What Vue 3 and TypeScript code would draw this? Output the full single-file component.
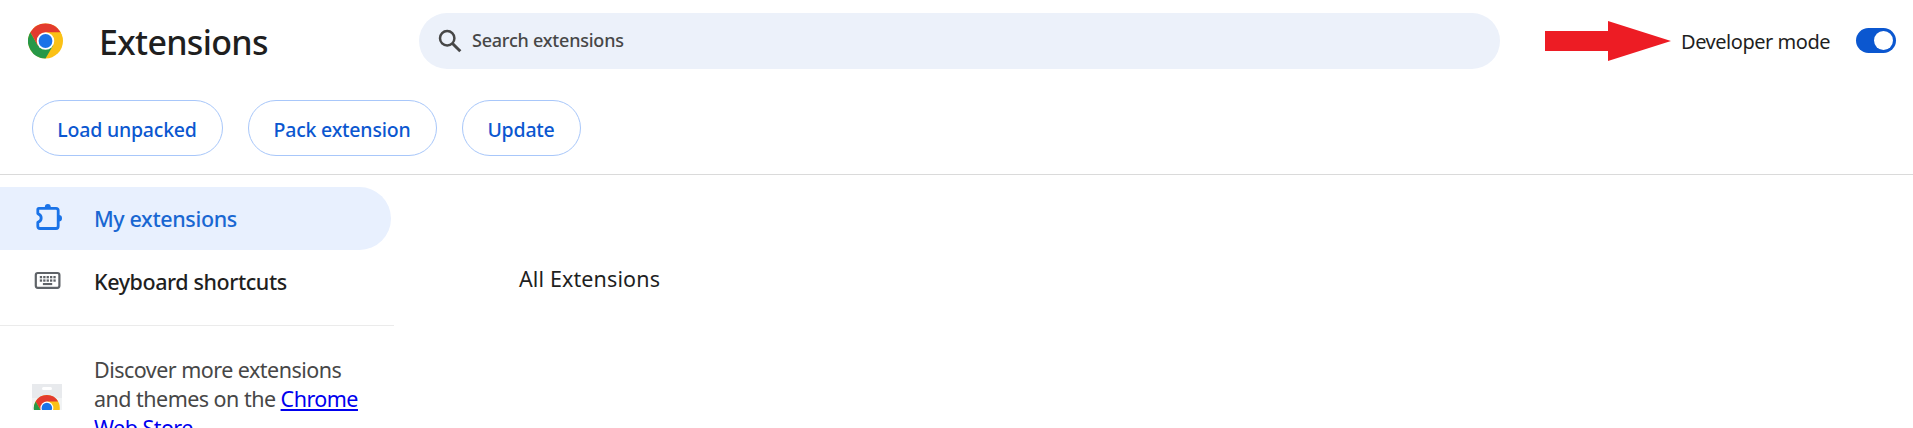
<script setup lang="ts">
interface Action {
  label: string
  name: string
}

const actions: Action[] = [
  { label: 'Load unpacked', name: 'load' },
  { label: 'Pack extension', name: 'pack' },
  { label: 'Update', name: 'update' },
]

const keyColumns = [0, 1, 2, 3, 4]
</script>

<template>
  <div class="page">
    <header class="topbar">
      <svg class="logo" viewBox="0 0 36 36">
        <circle cx="18" cy="18" r="18" fill="#fbc116" />
        <path d="M18 18 L2.41 9 A18 18 0 0 1 33.59 9 Z" fill="#e33b2e" />
        <path d="M18 9 H33.59 L34 14 L26 18 Z" fill="#fbc116" />
        <path d="M2.41 9 A18 18 0 0 0 18 36 L25.79 22.5 L18 18 L10.2 22.5 Z" fill="#279847" />
        <path d="M2.41 9 L10.2 22.5 L18 18 L18 9 Z" fill="#e33b2e" />
        <circle cx="18" cy="18" r="9" fill="#fff" />
        <circle cx="18" cy="18" r="7.1" fill="#1a73e8" />
      </svg>
      <h1 class="title">Extensions</h1>
      <div class="search">
        <svg class="search-icon" viewBox="0 0 24 24">
          <circle cx="9.2" cy="9.2" r="7.2" fill="none" stroke="#474747" stroke-width="2.5" />
          <path d="M14.5 14.5 L22.3 22.3" stroke="#474747" stroke-width="3" />
        </svg>
        <span class="search-text">Search extensions</span>
      </div>
      <svg class="arrow" viewBox="0 0 126 40">
        <path d="M0 10 H63 V0 L126 20 L63 40 V30 H0 Z" fill="#ed1c24" />
      </svg>
      <span class="dev-label">Developer mode</span>
      <div class="toggle"><div class="knob"></div></div>
    </header>

    <div class="toolbar">
      <button v-for="a in actions" :key="a.name" class="action" :class="a.name">{{ a.label }}</button>
    </div>

    <div class="body">
      <nav class="sidebar">
        <div class="item selected">
          <svg class="item-icon puzzle" viewBox="0 0 28 28">
            <path
              d="M3.9 5.3 H21 Q23.2 5.3 23.2 7.5 V23.3 Q23.2 25.5 21 25.5 H5 Q2.8 25.5 2.8 23.3 V19.4 Q6.2 18.2 6.2 15 Q6.2 11.8 2.8 10.6 V6.4 Q2.8 5.3 3.9 5.3 Z"
              fill="none" stroke="#1a73e8" stroke-width="2.8" stroke-linejoin="round"
            />
            <path d="M9.8 4.5 A3 3.4 0 0 1 15.8 4.5 Z M23.8 12 A3.2 3.2 0 0 1 23.8 18.4 Z" fill="#1a73e8" />
          </svg>
          <span>My extensions</span>
        </div>
        <div class="item">
          <svg class="item-icon keyboard" viewBox="0 0 28 28">
            <rect x="1.8" y="6" width="23.6" height="14.8" rx="2" fill="none" stroke="#5f6368" stroke-width="2.2" />
            <g fill="#5f6368">
              <template v-for="c in keyColumns" :key="c">
                <rect :x="5.8 + c * 3.4" y="9" width="2.3" height="2.3" />
                <rect :x="5.8 + c * 3.4" y="12.4" width="2.3" height="2.3" />
              </template>
              <rect x="8.9" y="16" width="9.3" height="2.1" />
            </g>
          </svg>
          <span class="shortcuts">Keyboard shortcuts</span>
        </div>
        <div class="promo">
          <svg class="store" viewBox="0 0 30 26">
            <rect width="30" height="26" fill="#f1f3f4" />
            <rect width="30" height="14" fill="#e8eaed" />
            <rect x="10" y="3" width="10" height="3" rx="1.5" fill="#fff" />
            <g transform="translate(1.9 11) scale(0.72)">
              <circle cx="18" cy="18" r="18" fill="#fbc116" />
              <path d="M2.41 9 A18 18 0 0 1 33.59 9 L18 9 V18 L10.2 22.5 Z" fill="#e33b2e" />
              <path d="M2.41 9 A18 18 0 0 0 18 36 L25.79 22.5 L18 18 L10.2 22.5 Z" fill="#279847" />
              <circle cx="18" cy="18" r="9" fill="#fff" />
              <circle cx="18" cy="18" r="7.3" fill="#1a73e8" />
            </g>
          </svg>
          <p class="promo-text">Discover more extensions<br />and themes on the <a href="#">Chrome<br />Web Store</a></p>
        </div>
      </nav>
      <main class="content">
        <h2 class="heading">All Extensions</h2>
      </main>
    </div>
  </div>
</template>

<style>
body {
  margin: 0;
  overflow: hidden;
  background: #fff;
}
</style>

<style scoped>
.page {
  width: 100%;
  height: 428px;
  overflow: hidden;
  font-family: "Noto Sans", "Open Sans", sans-serif;
  color: #1f1f1f;
}
.topbar {
  display: flex;
  align-items: center;
  height: 82px;
  padding: 0 17px 0 28px;
  box-sizing: border-box;
  white-space: nowrap;
}
.logo {
  width: 35px;
  height: 36px;
  flex: none;
}
.title {
  width: 320px;
  flex: none;
  margin: 0 0 0 36px;
  padding-top: 2px;
  font-size: 34px;
  font-weight: 500;
  letter-spacing: -0.68px;
  line-height: 46px;
}
.search {
  display: flex;
  align-items: center;
  width: 1081px;
  height: 56px;
  flex: none;
  border-radius: 28px;
  background: #ecf1fa;
}
.search-icon {
  width: 24px;
  height: 24px;
  margin-left: 19px;
}
.search-text {
  margin: 0 0 2px 10px;
  font-size: 18px;
  font-weight: 500;
  letter-spacing: -0.22px;
  color: #474747;
}
.arrow {
  width: 126px;
  height: 40px;
  flex: none;
  margin-left: 45px;
}
.dev-label {
  flex: none;
  margin: 1px 0 0 10px;
  font-size: 20px;
  letter-spacing: -0.46px;
}
.toggle {
  display: flex;
  justify-content: flex-end;
  align-items: center;
  width: 40px;
  height: 25px;
  flex: none;
  margin: 0 0 1px auto;
  padding-right: 3px;
  box-sizing: border-box;
  border-radius: 12.5px;
  background: #0b57d0;
}
.knob {
  width: 19px;
  height: 19px;
  border-radius: 50%;
  background: #fff;
}
.toolbar {
  display: flex;
  gap: 25px;
  height: 93px;
  padding: 18px 0 0 32px;
  box-sizing: border-box;
  border-bottom: 1px solid #dadada;
}
.action {
  height: 56px;
  padding: 2px 1px 0 0;
  border: 1px solid #a8c7fa;
  border-radius: 28px;
  background: #fff;
  color: #0b57d0;
  font-family: inherit;
  font-size: 19.5px;
  font-weight: 500;
  letter-spacing: -0.2px;
}
.load {
  width: 191px;
}
.pack {
  width: 189px;
}
.update {
  width: 119px;
}
.body {
  display: flex;
}
.sidebar {
  width: 394px;
  flex: none;
  padding-top: 12px;
}
.item {
  display: flex;
  align-items: center;
  width: 391px;
  height: 63px;
  padding-left: 34px;
  box-sizing: border-box;
  font-size: 21.5px;
  font-weight: 500;
  letter-spacing: -0.37px;
}
.selected {
  border-radius: 0 31.5px 31.5px 0;
  background: #e8f0fe;
  color: #1967d2;
}
.item-icon {
  width: 28px;
  height: 28px;
  margin-right: 32px;
}
.puzzle {
  margin: 0 31px 4px 1px;
}
.keyboard {
  margin-bottom: 2px;
}
.shortcuts {
  letter-spacing: -0.42px;
}
.promo {
  display: flex;
  margin-top: 12px;
  padding: 29px 0 0 32px;
  border-top: 1px solid #ebebeb;
}
.store {
  width: 30px;
  height: 26px;
  flex: none;
  margin-top: 29px;
}
.promo-text {
  margin: 0 0 0 32px;
  font-size: 21.5px;
  line-height: 29px;
  letter-spacing: -0.53px;
  white-space: nowrap;
  color: #474747;
}
.promo-text a {
  color: #0000ee;
  text-decoration-thickness: 2px;
  text-underline-offset: 2px;
}
.content {
  padding: 89px 0 0 125px;
}
.heading {
  margin: 0;
  font-size: 21.5px;
  font-weight: 400;
  line-height: 30px;
  letter-spacing: 0.12px;
}
</style>
